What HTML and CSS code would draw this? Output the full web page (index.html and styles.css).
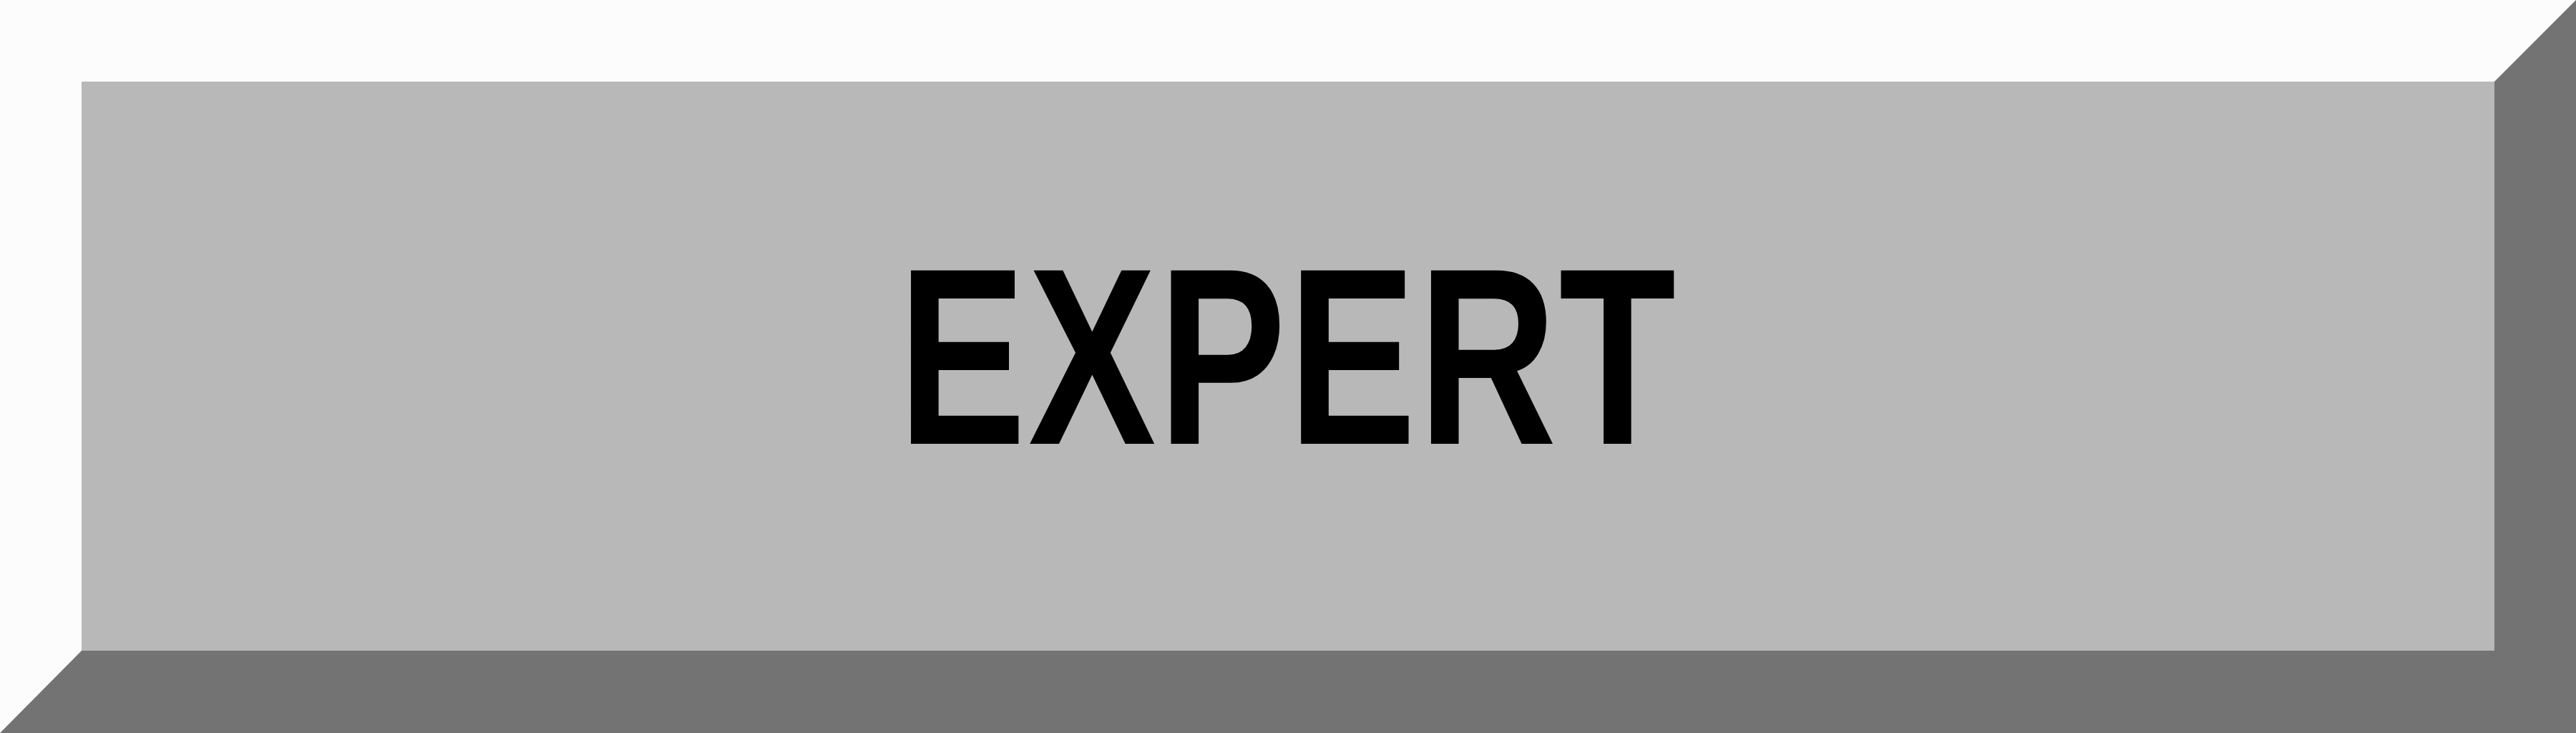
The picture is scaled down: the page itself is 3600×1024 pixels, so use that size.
FILE: index.html
```html
<!DOCTYPE html>
<html>
<head>
<meta charset="utf-8">
<link rel="stylesheet" href="styles.css">
</head>
<body>
<div class="button">
  <span class="label">EXPERT</span>
</div>
</body>
</html>
```

FILE: styles.css
```css
html, body {
  margin: 0;
  padding: 0;
  background: #fcfcfc;
}
.button {
  box-sizing: border-box;
  width: 3600px;
  height: 1024px;
  border-style: solid;
  border-width: 114px 114px 115px 114px;
  border-color: #fcfcfc #737373 #737373 #fcfcfc;
  background: #b8b8b8;
  display: flex;
  align-items: center;
  justify-content: center;
  padding-bottom: 28px;
}
.label {
  font-family: "Liberation Sans", Arial, sans-serif;
  font-weight: bold;
  font-size: 352px;
  line-height: 1;
  letter-spacing: 4px;
  color: #000;
  transform: scaleX(0.761);
  white-space: nowrap;
}
```
